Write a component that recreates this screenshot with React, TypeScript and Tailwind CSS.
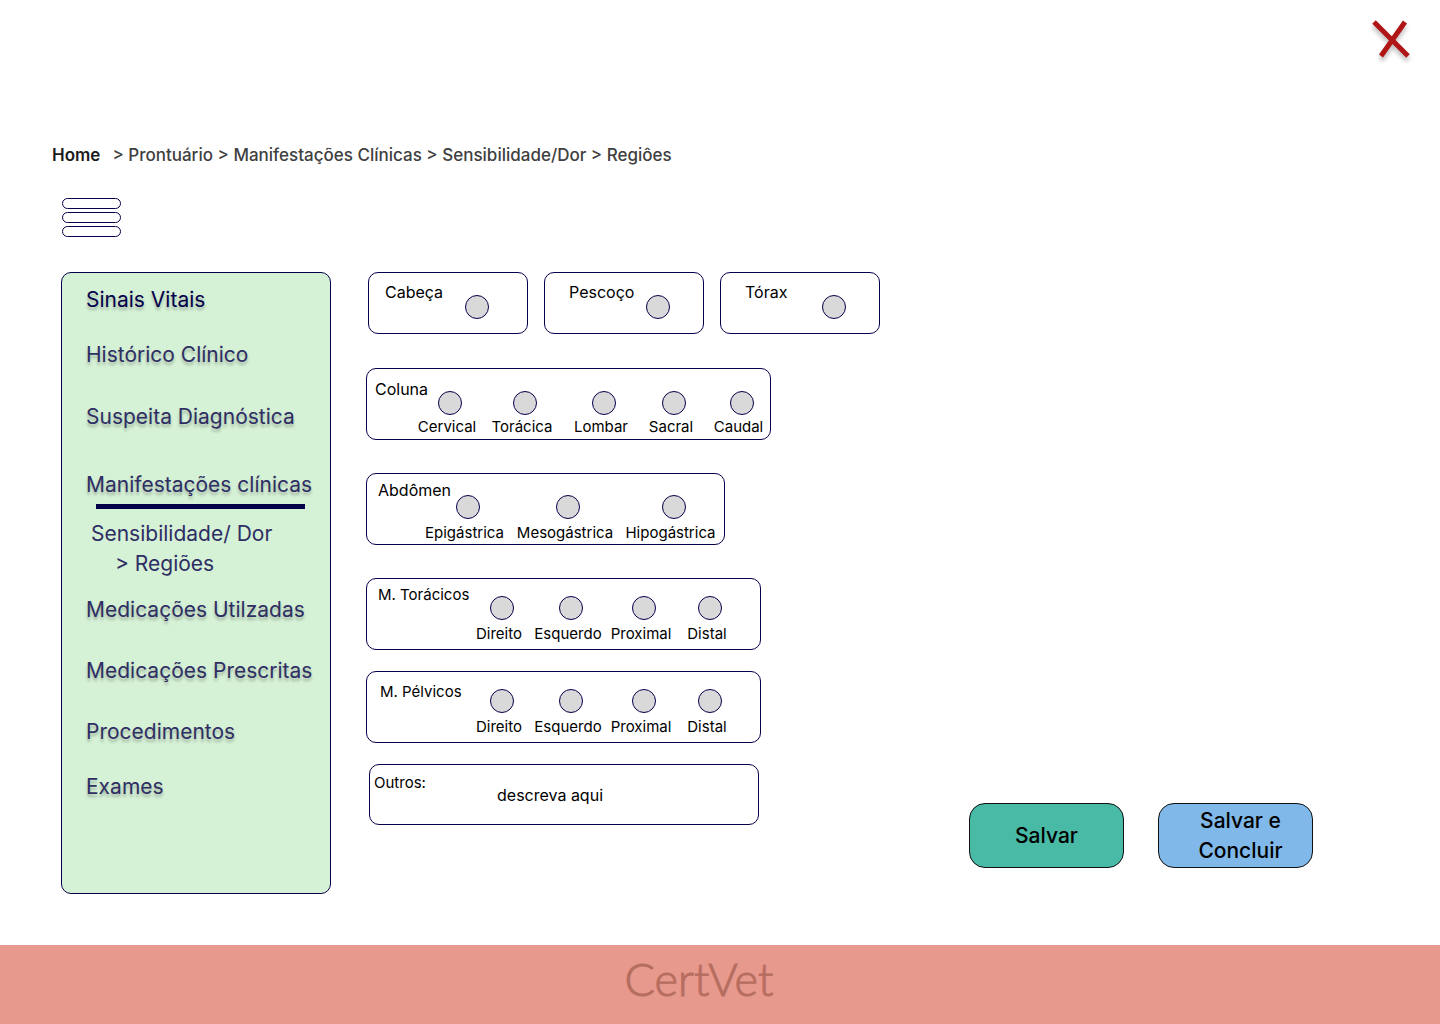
type RegionGroup = {
  id: string;
  title: string;
  card: string;
  titleBox: string;
  columns: string;
  optionGap: string;
  options: string[];
};

const limbOptions = ["Direito", "Esquerdo", "Proximal", "Distal"];

const singles = [
  { id: "cabeca", label: "Cabeça", pad: "pl-4", text: "w-20" },
  { id: "pescoco", label: "Pescoço", pad: "pl-6", text: "w-[77px]" },
  { id: "torax", label: "Tórax", pad: "pl-6", text: "w-[77px]" },
];

const groups: RegionGroup[] = [
  {
    id: "coluna",
    title: "Coluna",
    card: "mt-[34px] max-w-[405px] pl-2",
    titleBox: "w-[43px] pt-2 text-[16px]",
    columns: "grid-cols-[58px_92px_66px_74px_61px] pt-[22px]",
    optionGap: "gap-0",
    options: ["Cervical", "Torácica", "Lombar", "Sacral", "Caudal"],
  },
  {
    id: "abdomen",
    title: "Abdômen",
    card: "mt-[33px] max-w-[359px] pl-[11px]",
    titleBox: "w-[39px] pt-1 text-[16px]",
    columns: "grid-cols-[95px_106px_105px] pt-[21px]",
    optionGap: "gap-0.5",
    options: ["Epigástrica", "Mesogástrica", "Hipogástrica"],
  },
  {
    id: "toracicos",
    title: "M. Torácicos",
    card: "mt-[33px] max-w-[395px] pl-[11px]",
    titleBox: "w-[89px] pt-1 text-[15px]",
    columns: "grid-cols-[64px_74px_72px_60px] pt-[17px]",
    optionGap: "gap-0.5",
    options: limbOptions,
  },
  {
    id: "pelvicos",
    title: "M. Pélvicos",
    card: "mt-[21px] max-w-[395px] pl-[13px]",
    titleBox: "w-[87px] pt-2 text-[15px]",
    columns: "grid-cols-[64px_74px_72px_60px] pt-[17px]",
    optionGap: "gap-0.5",
    options: limbOptions,
  },
];

const radioClass =
  "block size-6 shrink-0 cursor-pointer appearance-none rounded-full border border-[#04004a] bg-[#d9d9d9] checked:bg-[#04004a]";

const linkShadow = "[text-shadow:0_3px_3px_rgba(0,0,0,0.25)]";

function NavLink({ label, className }: { label: string; className: string }) {
  return (
    <li className={className}>
      <a href="#" className={linkShadow}>
        {label}
      </a>
    </li>
  );
}

function Sidebar() {
  return (
    <nav
      aria-label="Prontuário"
      className="w-[270px] shrink-0 rounded-[10px] border border-[#04004a] bg-[#d5f1d6] pt-3 pb-[91px] pl-6"
    >
      <ul className="text-[21px] leading-[30px] whitespace-nowrap text-[#2e2e63]">
        <NavLink label="Sinais Vitais" className="text-[#04004a]" />
        <NavLink label="Histórico Clínico" className="mt-[25px]" />
        <NavLink label="Suspeita Diagnóstica" className="mt-8" />
        <li className="mt-[38px]">
          <a href="#" className={linkShadow}>
            Manifestações clínicas
          </a>
          <div className="mt-1 ml-2.5 h-[5px] w-[209px] bg-[#04004a]" />
          <ul className="mt-2.5 pl-[5px]">
            <li>
              <a href="#">Sensibilidade/ Dor</a>
            </li>
            <li className="pl-6">
              <a href="#">&gt; Regiões</a>
            </li>
          </ul>
        </li>
        <NavLink label="Medicações Utilzadas" className="mt-4" />
        <NavLink label="Medicações Prescritas" className="mt-[31px]" />
        <NavLink label="Procedimentos" className="mt-[31px]" />
        <NavLink label="Exames" className="mt-[25px]" />
      </ul>
    </nav>
  );
}

function GroupCard({ group }: { group: RegionGroup }) {
  return (
    <div
      role="radiogroup"
      aria-labelledby={group.id}
      className={`flex h-[72px] w-full rounded-[10px] border border-[#04004a] ${group.card}`}
    >
      <span id={group.id} className={`shrink-0 leading-6 whitespace-nowrap ${group.titleBox}`}>
        {group.title}
      </span>
      <div className={`grid ${group.columns}`}>
        {group.options.map((option) => (
          <label
            key={option}
            className={`flex flex-col items-center text-[15px] leading-6 whitespace-nowrap ${group.optionGap}`}
          >
            <span className="pl-1.5">
              <input type="radio" name={group.id} className={radioClass} />
            </span>
            {option}
          </label>
        ))}
      </div>
    </div>
  );
}

export default function App() {
  return (
    <div className="flex min-h-screen flex-col bg-white font-['Inter',sans-serif] text-black">
      <header className="flex h-[143px] justify-end pt-3.5 pr-6">
        <button type="button" aria-label="Fechar" className="size-14">
          <svg
            viewBox="0 0 56 56"
            className="size-14 drop-shadow-[0_4px_2px_rgba(0,0,0,0.25)]"
            fill="none"
            stroke="#b11616"
            strokeWidth="5"
          >
            <path d="M14 8 48 42M45 8 21 42" />
          </svg>
        </button>
      </header>

      <nav
        aria-label="Trilha"
        className="flex pl-[52px] text-[17px] leading-6 font-medium whitespace-pre text-[#404040]"
      >
        <a href="#" className="font-semibold text-[#1c1c1c]">
          Home
        </a>
        <span className="pl-3">
          &gt; <a href="#">Prontuário</a> &gt; <a href="#">Manifestações Clínicas</a> &gt;{" "}
          <a href="#">Sensibilidade/Dor</a> &gt; <a href="#">Regiôes</a>
        </span>
      </nav>

      <button
        type="button"
        aria-label="Menu"
        className="mt-[31px] ml-[62px] flex w-[59px] cursor-pointer flex-col gap-[3px]"
      >
        <span className="h-[11px] w-full rounded-full border border-[#04004a]" />
        <span className="h-[11px] w-full rounded-full border border-[#04004a]" />
        <span className="h-[11px] w-full rounded-full border border-[#04004a]" />
      </button>

      <main className="mt-[35px] mb-[51px] flex flex-1 pr-[127px] pl-[61px]">
        <Sidebar />

        <form className="ml-[35px] flex flex-1 justify-between text-[16px]">
          <div className="w-[514px] shrink-0">
            <div className="grid grid-cols-3 gap-4 pl-0.5">
              {singles.map((item) => (
                <label
                  key={item.id}
                  className={`flex h-[62px] rounded-[10px] border border-[#04004a] ${item.pad}`}
                >
                  <span className={`pt-[7px] leading-6 ${item.text}`}>{item.label}</span>
                  <span className="pt-[22px]">
                    <input type="radio" name={item.id} className={radioClass} />
                  </span>
                </label>
              ))}
            </div>

            {groups.map((group) => (
              <GroupCard key={group.id} group={group} />
            ))}

            <div className="mt-[21px] ml-[3px] flex h-[61px] max-w-[390px] rounded-[10px] border border-[#04004a] pl-1">
              <label htmlFor="outros" className="w-[123px] pt-1.5 text-[15px] leading-6">
                Outros:
              </label>
              <input
                id="outros"
                type="text"
                placeholder="descreva aqui"
                className="min-w-0 flex-1 rounded-[10px] bg-transparent leading-6 outline-none placeholder:text-black"
              />
            </div>
          </div>

          <div className="mb-[26px] flex items-end gap-[34px] text-[21px] leading-[30px] font-medium">
            <button
              type="submit"
              className="h-[65px] w-[155px] rounded-2xl border border-[#111] bg-[#48baa6]"
            >
              Salvar
            </button>
            <button
              type="submit"
              className="h-[65px] w-[155px] rounded-2xl border border-[#111] bg-[#80b8e9] pl-2.5"
            >
              Salvar e<br />
              Concluir
            </button>
          </div>
        </form>
      </main>

      <footer className="flex h-[79px] items-start justify-center bg-[#e8998d] pt-2 pr-[42px]">
        <span className="font-['Lato',sans-serif] text-[45px] leading-[52px] font-light text-[#b66e60] [-webkit-text-stroke:1px_#b66e60]">
          CertVet
        </span>
      </footer>
    </div>
  );
}
